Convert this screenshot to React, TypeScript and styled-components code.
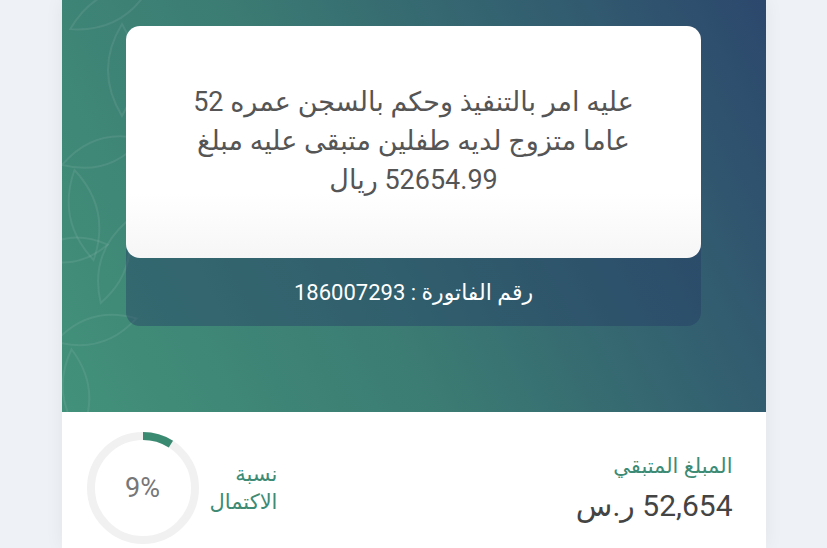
import React from 'react'
import styled, { createGlobalStyle } from 'styled-components'

const GlobalStyle = createGlobalStyle`
    html, body {
        margin: 0;
        padding: 0;
        background: #eef1f5;
    }

    body {
        font-family: Roboto, "DejaVu Sans", sans-serif;
    }
`

const Page = styled.div`
    width: 704px;
    min-height: 548px;
    margin: 0 auto;
    background: #ffffff;
    box-shadow: 0 0 18px rgba(40, 60, 80, 0.06);
    direction: rtl;
`

const Hero = styled.section`
    position: relative;
    overflow: hidden;
    height: 412px;
    box-sizing: border-box;
    padding-top: 26px;

    background: linear-gradient(62deg, #42917a 0%, #3b7b73 42%, #2c486d 100%);
`

const Pattern = styled.svg`
    position: absolute;
    inset: 0;
    width: 100%;
    height: 100%;
    pointer-events: none;
`

const InvoiceCard = styled.div`
    position: relative;
    z-index: 1;

    width: 575px;
    margin: 0 auto;

    background: rgba(34, 54, 100, 0.4);
    border-radius: 14px;
`

const MessageBox = styled.div`
    height: 232px;
    box-sizing: border-box;

    display: flex;
    align-items: center;
    justify-content: center;

    background: linear-gradient(to bottom, #ffffff 72%, #f6f6f6 100%);
    border-radius: 14px;
`

const Message = styled.p`
    margin: 0;
    padding-bottom: 2px;

    font-size: 27px;
    line-height: 39px;
    color: #555555;
    text-align: center;
`

const InvoiceNumber = styled.div`
    height: 68px;

    display: flex;
    align-items: center;
    justify-content: center;

    font-size: 22px;
    color: #ffffff;
`

const Summary = styled.section`
    display: flex;
    align-items: center;
    justify-content: space-between;

    padding: 20px 33px 0 25px;
`

const Remaining = styled.div`
    display: flex;
    flex-direction: column;
    gap: 8px;
`

const Label = styled.span`
    font-size: 21px;
    line-height: 28px;
    color: #3d8b74;
`

const Amount = styled.span`
    font-size: 30px;
    line-height: 36px;
    color: #444444;
`

const Completion = styled.div`
    display: flex;
    align-items: center;
    gap: 11px;
`

const CompletionLabel = styled.span`
    font-size: 21px;
    line-height: 28px;
    color: #3d8b74;
    text-align: right;
`

const Ring = styled.div`
    position: relative;
    width: 112px;
    height: 112px;
`

const RingValue = styled.span`
    position: absolute;
    inset: 0;

    display: flex;
    align-items: center;
    justify-content: center;

    direction: ltr;
    font-size: 27px;
    color: #777777;
`

// leaves drawn faintly on the left of the hero
const leaves = [
    { x: 60, y: 70, len: 92, wid: 28, rot: 0 },
    { x: 48, y: 8, len: 90, wid: 28, rot: 62 },
    { x: 40, y: 152, len: 84, wid: 26, rot: 72 },
    { x: 22, y: 215, len: 92, wid: 28, rot: -12 },
    { x: 8, y: 250, len: 76, wid: 24, rot: 82 },
    { x: 52, y: 262, len: 86, wid: 26, rot: 18 },
    { x: 34, y: 330, len: 84, wid: 26, rot: 74 },
    { x: 14, y: 392, len: 86, wid: 26, rot: -6 },
]

const LeafPattern = () => (
    <Pattern viewBox="0 0 704 412" preserveAspectRatio="none">
        {leaves.map((l, i) => (
            <path
                key={i}
                d={`M0 ${-l.len / 2} Q ${l.wid} 0 0 ${l.len / 2} Q ${-l.wid} 0 0 ${-l.len / 2} Z`}
                transform={`translate(${l.x} ${l.y}) rotate(${l.rot})`}
                fill="none"
                stroke="rgba(255,255,255,0.08)"
                strokeWidth="2"
            />
        ))}
    </Pattern>
)

const ProgressRing = ({ percent }: { percent: number }) => {
    const r = 52
    const c = 2 * Math.PI * r

    return (
        <Ring>
            <svg width="112" height="112" viewBox="0 0 112 112">
                <circle cx="56" cy="56" r={r} fill="none" stroke="#f1f1f1" strokeWidth="8" />
                <circle
                    cx="56"
                    cy="56"
                    r={r}
                    fill="none"
                    stroke="#3a8a72"
                    strokeWidth="8"
                    strokeDasharray={`${(c * percent) / 100} ${c}`}
                    transform="rotate(-90 56 56)"
                />
            </svg>
            <RingValue>{percent}%</RingValue>
        </Ring>
    )
}

export default function App() {
    return (
        <>
            <GlobalStyle />
            <Page>
                <Hero>
                    <LeafPattern />
                    <InvoiceCard>
                        <MessageBox>
                            <Message>
                                عليه امر بالتنفيذ وحكم بالسجن عمره 52
                                <br />
                                عاما متزوج لديه طفلين متبقى عليه مبلغ
                                <br />
                                52654.99 ريال
                            </Message>
                        </MessageBox>
                        <InvoiceNumber>رقم الفاتورة : 186007293</InvoiceNumber>
                    </InvoiceCard>
                </Hero>

                <Summary>
                    <Remaining>
                        <Label>المبلغ المتبقي</Label>
                        <Amount>52,654 ر.س</Amount>
                    </Remaining>
                    <Completion>
                        <CompletionLabel>
                            نسبة
                            <br />
                            الاكتمال
                        </CompletionLabel>
                        <ProgressRing percent={9} />
                    </Completion>
                </Summary>
            </Page>
        </>
    )
}
